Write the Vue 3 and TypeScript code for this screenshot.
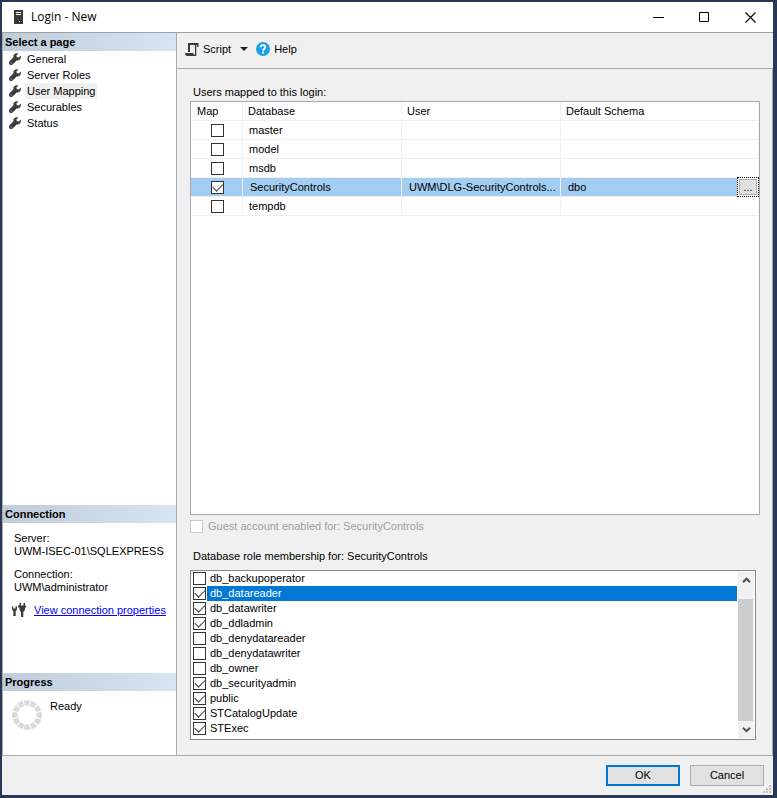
<script setup lang="ts">
import { ref } from 'vue'

interface DatabaseRow {
  name: string
  user: string
  schema: string
  mapped: boolean
}

interface Role {
  name: string
  member: boolean
}

const pages = ['General', 'Server Roles', 'User Mapping', 'Securables', 'Status']
const currentPage = ref('User Mapping')

const databases = ref<DatabaseRow[]>([
  { name: 'master', user: '', schema: '', mapped: false },
  { name: 'model', user: '', schema: '', mapped: false },
  { name: 'msdb', user: '', schema: '', mapped: false },
  { name: 'SecurityControls', user: 'UWM\\DLG-SecurityControls...', schema: 'dbo', mapped: true },
  { name: 'tempdb', user: '', schema: '', mapped: false },
])
const selectedDatabase = ref('SecurityControls')

const roles = ref<Role[]>([
  { name: 'db_backupoperator', member: false },
  { name: 'db_datareader', member: true },
  { name: 'db_datawriter', member: true },
  { name: 'db_ddladmin', member: true },
  { name: 'db_denydatareader', member: false },
  { name: 'db_denydatawriter', member: false },
  { name: 'db_owner', member: false },
  { name: 'db_securityadmin', member: true },
  { name: 'public', member: true },
  { name: 'STCatalogUpdate', member: true },
  { name: 'STExec', member: true },
])
const selectedRole = ref('db_datareader')

// Start angle of each segment of the progress ring
const segments = Array.from({ length: 12 }, (_, i) => i * 30)
</script>

<template>
  <div class="desktop">
    <div class="window">
      <header class="titlebar">
        <svg class="server-icon" width="9" height="14" viewBox="0 0 9 14" aria-hidden="true">
          <rect width="9" height="14" fill="#3b3b3b" />
          <path d="M2 2.500h5M2 4.500h5" stroke="#fff" />
          <rect x="5" y="11" width="1" height="1" fill="#fff" />
        </svg>
        <h1>Login - New</h1>
        <div class="window-buttons">
          <button type="button" aria-label="Minimize">
            <svg width="11" height="11" viewBox="0 0 11 11"><path d="M0 5.500h11" stroke="#000" /></svg>
          </button>
          <button type="button" aria-label="Maximize">
            <svg width="11" height="11" viewBox="0 0 11 11"><path d="M.5.5h9v9h-9z" fill="none" stroke="#000" /></svg>
          </button>
          <button type="button" aria-label="Close">
            <svg width="11" height="11" viewBox="0 0 11 11"><path d="M.5.5l10 10M10.500.5l-10 10" stroke="#000" stroke-width="1.100" /></svg>
          </button>
        </div>
      </header>

      <div class="body">
        <aside class="sidebar">
          <section class="pages">
            <h2>Select a page</h2>
            <ul>
              <li v-for="page in pages" :key="page">
                <button type="button" class="page" @click="currentPage = page">
                  <svg width="12" height="12" viewBox="0 0 12 12" aria-hidden="true">
                    <path d="M11.600 2.700 9.700 4.500 7.800 4.200 7.500 2.300 9.300.4C7.700-.2 5.600.3 4.700 2 4.300 2.900 4.300 3.500 4.500 4.200L.5 8.200C-.4 9.200-.2 10.700.6 11.400 1.400 12.200 2.700 12.200 3.600 11.500L7.700 7.500C8.500 7.700 9.500 7.500 10.200 7.100 11.700 6.200 12.200 4.200 11.600 2.700Z" fill="#3b3b3b" />
                    <circle cx="2.100" cy="10" r=".5" fill="#fff" />
                  </svg>
                  <span :class="{ current: page === currentPage }">{{ page }}</span>
                </button>
              </li>
            </ul>
          </section>

          <section class="connection">
            <h2>Connection</h2>
            <dl>
              <dt>Server:</dt>
              <dd>UWM-ISEC-01\SQLEXPRESS</dd>
              <dt>Connection:</dt>
              <dd>UWM\administrator</dd>
            </dl>
            <div class="properties">
              <svg width="14" height="14" viewBox="0 0 14 14" aria-hidden="true">
                <path d="M0 3.500 1.200 3V5.500H3.500V3L5 3.500V6.500L3.700 8V13H1.300V8L0 6.500Z" fill="#3b3b3b" />
                <path d="M7.500 0H9V2.500H11.500V0H13V2.500H14V4.500H13V7L11.300 9V14H9V9L7.500 7V4.500H6V2.500H7.500Z" fill="#3b3b3b" />
              </svg>
              <a href="#">View connection properties</a>
            </div>
          </section>

          <section class="progress">
            <h2>Progress</h2>
            <div class="status">
              <svg width="30" height="30" viewBox="-15 -15 30 30" aria-hidden="true">
                <path
                  v-for="angle in segments"
                  :key="angle"
                  d="M-3.300-14.500A15 15 0 0 1 3.300-14.500L2.100-9.300A10 10 0 0 0-2.100-9.300Z"
                  fill="#dadada"
                  :transform="`rotate(${angle})`"
                />
              </svg>
              <span>Ready</span>
            </div>
          </section>
        </aside>

        <main>
          <div class="toolbar">
            <button type="button" class="tool script">
              <svg width="14" height="13" viewBox="0 0 14 13" aria-hidden="true">
                <path d="M3 0H13.500V4H12V2H5V9H3Z" fill="#3b3b3b" />
                <path d="M0 10H8.500V11.500H10V2H11.300V13H1.500Q0 12.500 0 10Z" fill="#3b3b3b" />
              </svg>
              <span>Script</span>
            </button>
            <button type="button" class="tool arrow" aria-label="Script options">
              <svg width="8" height="4" viewBox="0 0 8 4"><path d="M0 0h8L4 4Z" fill="#1e1e1e" /></svg>
            </button>
            <button type="button" class="tool help">
              <svg width="14" height="14" viewBox="0 0 14 14" aria-hidden="true">
                <circle cx="7" cy="7" r="7" fill="#1ba1e2" />
                <path d="M4.700 5.300C4.700 2.400 9.300 2.400 9.300 5.100 9.300 6.800 7 6.600 7 8.700" fill="none" stroke="#fff" stroke-width="1.900" />
                <rect x="6" y="9.700" width="2" height="1.800" fill="#fff" />
              </svg>
              <span>Help</span>
            </button>
          </div>

          <div class="content">
            <h3 id="users-label">Users mapped to this login:</h3>
            <div class="grid">
              <table aria-labelledby="users-label">
                <colgroup>
                  <col class="col-map" />
                  <col class="col-name" />
                  <col class="col-name" />
                  <col />
                </colgroup>
                <thead>
                  <tr>
                    <th>Map</th>
                    <th>Database</th>
                    <th>User</th>
                    <th>Default Schema</th>
                  </tr>
                </thead>
                <tbody>
                  <tr
                    v-for="db in databases"
                    :key="db.name"
                    :class="{ selected: db.name === selectedDatabase }"
                    @click="selectedDatabase = db.name"
                  >
                    <td class="map"><input v-model="db.mapped" type="checkbox" :aria-label="db.name" /></td>
                    <td>{{ db.name }}</td>
                    <td>{{ db.user }}</td>
                    <td>
                      {{ db.schema }}
                      <button v-if="db.name === selectedDatabase" type="button" class="browse" aria-label="Browse schemas"><span>...</span></button>
                    </td>
                  </tr>
                </tbody>
              </table>
            </div>

            <label class="guest">
              <input type="checkbox" disabled />
              <span>Guest account enabled for: {{ selectedDatabase }}</span>
            </label>

            <h3 id="roles-label">Database role membership for: {{ selectedDatabase }}</h3>
            <div class="roles" role="group" aria-labelledby="roles-label">
              <ul>
                <li v-for="role in roles" :key="role.name">
                  <label :class="{ active: role.name === selectedRole }" @click="selectedRole = role.name">
                    <input v-model="role.member" type="checkbox" />
                    <span>{{ role.name }}</span>
                  </label>
                </li>
              </ul>
              <div class="scrollbar">
                <button type="button" aria-label="Scroll up">
                  <svg width="9" height="7" viewBox="0 0 9 7"><path d="M1 5.200 4.500 1.700 8 5.200" fill="none" stroke="#505050" stroke-width="2" /></svg>
                </button>
                <div class="thumb"></div>
                <button type="button" class="down" aria-label="Scroll down">
                  <svg width="9" height="7" viewBox="0 0 9 7"><path d="M1 1.700 4.500 5.200 8 1.700" fill="none" stroke="#505050" stroke-width="2" /></svg>
                </button>
              </div>
            </div>
          </div>
        </main>
      </div>

      <footer>
        <button type="button" class="action primary">OK</button>
        <button type="button" class="action">Cancel</button>
        <svg class="grip" width="8" height="8" viewBox="0 0 8 8" aria-hidden="true">
          <path d="M6 0h2v2H6zM3 3h2v2H3zM6 3h2v2H6zM0 6h2v2H0zM3 6h2v2H3zM6 6h2v2H6z" fill="#bfbfbf" />
        </svg>
      </footer>
    </div>
  </div>
</template>

<style>
body {
  margin: 0;
}
</style>

<style scoped>
* {
  box-sizing: border-box;
}

.desktop {
  display: flex;
  min-height: 100vh;
  padding: 2px 4px 3px 2px;
  background: #293955;
  font-family: "Liberation Sans", Arial, sans-serif;
  font-size: 11px;
  line-height: 13px;
  color: #000;
}

h1, h2, h3, ul, dl, dd {
  margin: 0;
  padding: 0;
  font-size: inherit;
  font-weight: normal;
  list-style: none;
}

button {
  padding: 0;
  border: 0;
  background: none;
  font: inherit;
  color: inherit;
}

svg {
  display: block;
  flex: none;
}

.window {
  display: flex;
  flex: 1;
  flex-direction: column;
  min-width: 0;
  background: #f0f0f0;
}

/* Title bar */
.titlebar {
  display: flex;
  align-items: center;
  height: 31px;
  padding-left: 12px;
  border-bottom: 1px solid #a0a0a0;
  background: #fff;
}

.titlebar h1 {
  flex: 1;
  margin-left: 8px;
  font-family: "Open Sans", "Noto Sans", sans-serif;
  font-size: 12px;
  line-height: 16px;
}

.window-buttons {
  display: flex;
}

.window-buttons button {
  display: grid;
  place-items: center;
  width: 46px;
  height: 29px;
}

/* Body */
.body {
  display: flex;
  flex: 1;
  border-bottom: 1px solid #a9a9b0;
}

.sidebar {
  display: flex;
  flex: none;
  flex-direction: column;
  width: 175px;
  border: solid #a9a9b0;
  border-width: 0 1px;
  background: #fff;
}

.sidebar h2 {
  height: 18px;
  padding-left: 2px;
  background: linear-gradient(to right, #bfcddb, #d7e4f2);
  font-weight: bold;
  line-height: 18px;
}

.pages {
  flex: 1;
}

.page {
  display: flex;
  align-items: center;
  gap: 4px;
  height: 16px;
  padding-left: 6px;
}

.page span {
  padding: 0 2px;
  line-height: 16px;
}

.page .current {
  background: #f0f0f0;
}

.connection {
  height: 168px;
}

dl {
  padding: 9px 11px 0;
}

dd + dt {
  margin-top: 10px;
}

.properties {
  display: flex;
  align-items: center;
  gap: 8px;
  padding: 9px 0 0 9px;
}

a {
  line-height: 12px;
  color: #00f;
}

.progress {
  height: 82px;
}

.status {
  display: flex;
  gap: 8px;
  padding: 9px;
}

/* Toolbar */
main {
  display: flex;
  flex: 1;
  flex-direction: column;
  min-width: 0;
}

.toolbar {
  display: flex;
  align-items: center;
  height: 36px;
  padding: 0 8px 3px;
  border-bottom: 1px solid #a9a9b0;
}

.tool {
  display: flex;
  align-items: center;
  gap: 4px;
}

.arrow {
  padding: 0 8px 0 9px;
}

/* Content */
.content {
  display: flex;
  flex: 1;
  flex-direction: column;
  padding: 17px 12px 15px 13px;
  border-right: 1px solid #a9a9b0;
}

h3 {
  padding-left: 3px;
}

.grid {
  flex: 1;
  margin: 2px 0 5px;
  border: 1px solid #a9a9b0;
  background: #fff;
}

table {
  width: 100%;
  table-layout: fixed;
  border-spacing: 0;
}

.col-map {
  width: 52px;
}

.col-name {
  width: 159px;
}

th, td {
  position: relative;
  height: 19px;
  padding: 0 6px;
  border: solid #f0f0f0;
  border-width: 0 1px 1px 0;
  font-weight: normal;
  line-height: 18px;
  text-align: left;
  white-space: nowrap;
}

th + th {
  padding-left: 5px;
}

.map {
  padding: 0;
}

.map input {
  margin: 3px auto 2px 20px;
}

.selected td {
  padding-left: 7px;
  background: #a3cef1;
}

.selected .map {
  padding: 0;
}

.browse {
  position: absolute;
  top: -1px;
  right: -1px;
  width: 22px;
  height: 20px;
  border: 1px dotted #000;
  background: #fff;
}

.browse span {
  display: block;
  height: 16px;
  margin: 1px;
  border: 1px solid #adadad;
  background: #e1e1e1;
  line-height: 15px;
  text-align: center;
}

/* Tick boxes */
input {
  display: block;
  flex: none;
  width: 13px;
  height: 13px;
  margin: 0;
  border: 1px solid #333;
  background: #fff;
  appearance: none;
}

input:checked::after {
  display: block;
  width: 9px;
  height: 5px;
  margin: 1px 0 0 1px;
  border: solid #404040;
  border-width: 0 0 1px 1px;
  content: "";
  transform: rotate(-45deg);
}

input:disabled {
  border-color: #ccc;
}

.guest {
  display: flex;
  align-items: center;
  gap: 5px;
  margin-bottom: 17px;
  color: #a0a0a0;
}

/* Role list */
.roles {
  display: flex;
  margin: 7px 4px 0 0;
  border: 1px solid #828790;
  background: #fff;
}

.roles ul {
  flex: 1;
  padding: 0 1px 3px 2px;
}

.roles label {
  display: flex;
  align-items: center;
  gap: 1px;
  height: 15px;
}

.roles label span {
  flex: 1;
  padding-left: 3px;
  line-height: 15px;
}

.roles .active span {
  background: #0078d7;
  color: #fff;
}

.scrollbar {
  display: flex;
  flex-direction: column;
  width: 16px;
  margin: 1px 1px 1px 0;
  background: #f0f0f0;
}

.scrollbar button {
  display: grid;
  place-items: center;
  height: 17px;
}

.thumb {
  flex: 1;
  width: 15px;
  margin-top: 10px;
  background: #cdcdcd;
}

/* Footer */
footer {
  position: relative;
  display: flex;
  justify-content: flex-end;
  gap: 10px;
  padding: 9px 9px;
}

.action {
  width: 74px;
  height: 21px;
  border: 1px solid #adadad;
  background: #e1e1e1;
}

.primary {
  border: 2px solid #0078d7;
}

.grip {
  position: absolute;
  right: 2px;
  bottom: 2px;
}
</style>
